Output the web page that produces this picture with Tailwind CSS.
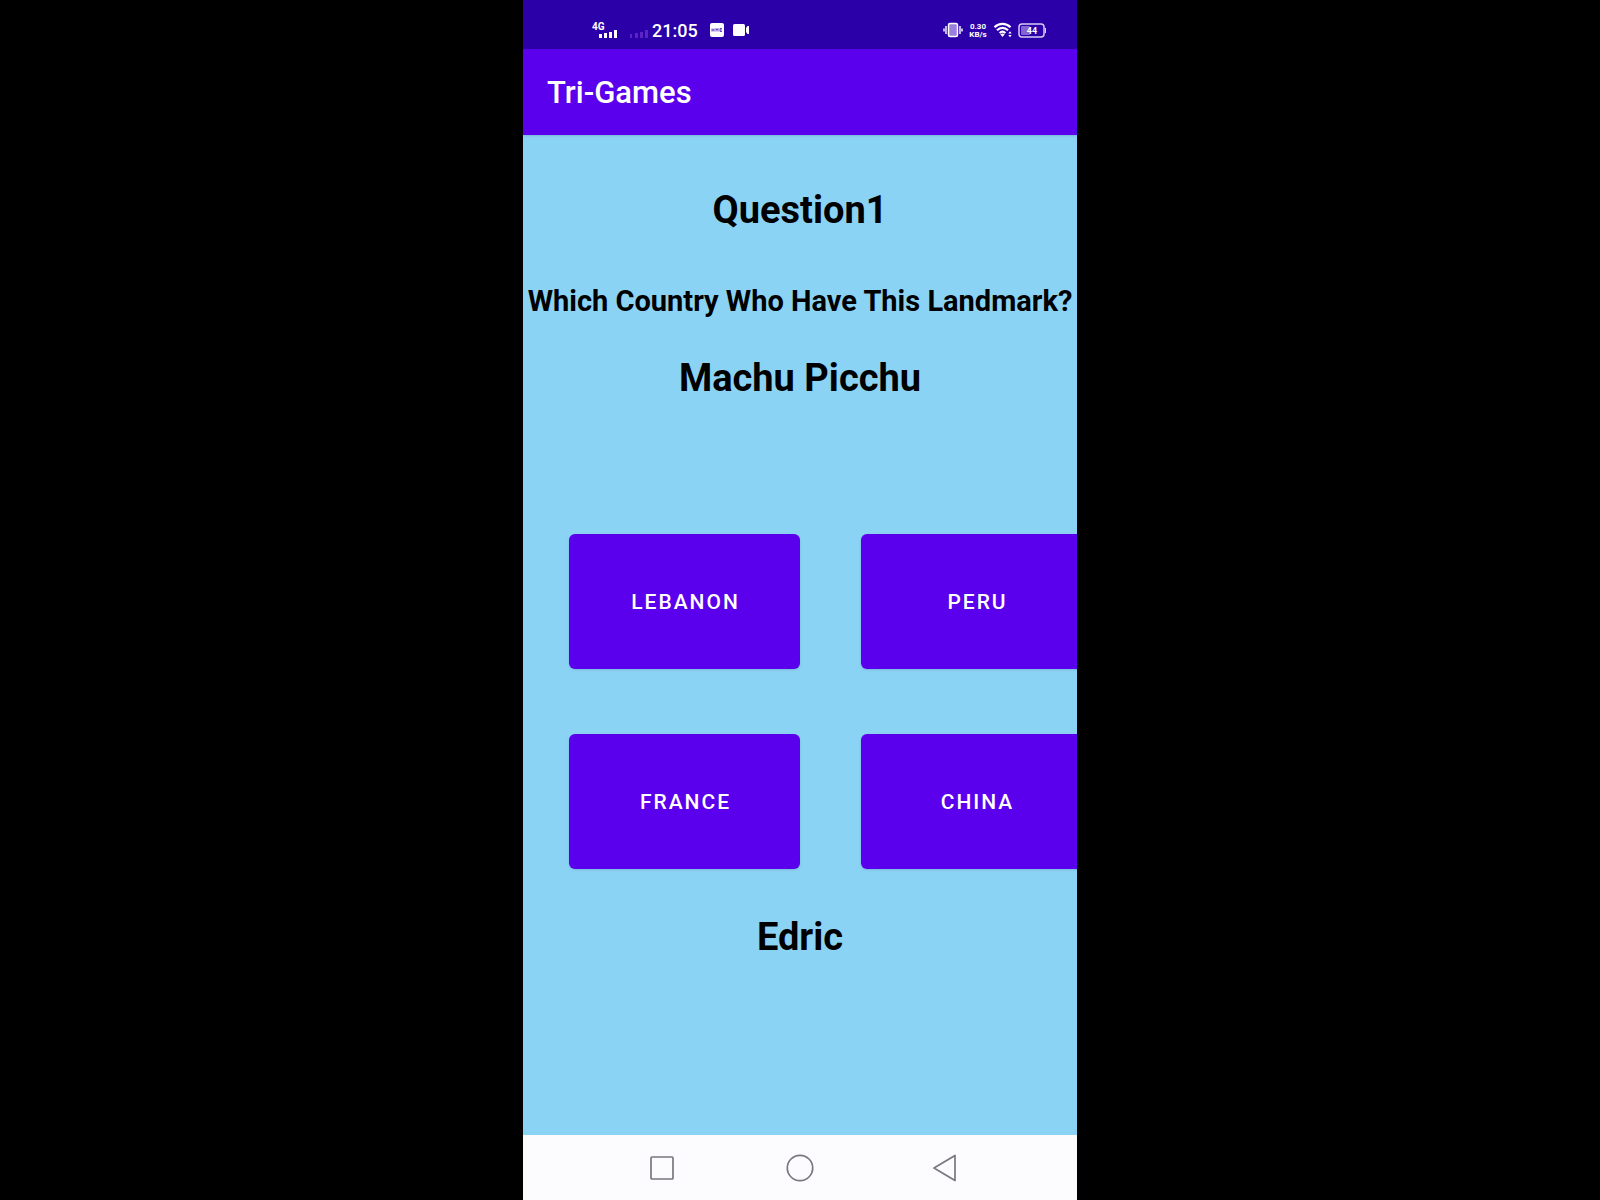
<!DOCTYPE html>
<html lang="en">
<head>
<meta charset="utf-8">
<meta name="viewport" content="width=device-width, initial-scale=1">
<title>Tri-Games</title>
<script src="https://cdn.jsdelivr.net/npm/@tailwindcss/browser@4"></script>
</head>
<body class="bg-black font-[Roboto,sans-serif]">
<div class="mx-auto flex min-h-screen w-full max-w-[554px] flex-col overflow-hidden bg-[#8bd3f5]">

  <!-- Status bar -->
  <div class="flex h-[49px] items-center justify-between bg-[#2b00a8] pt-[13px] pr-[31px] pl-[69px] text-white">
    <div class="flex items-center">
      <svg class="h-5 w-7" viewBox="0 0 28 20" role="img" aria-label="4G signal">
        <text x="0" y="9" font-size="10" font-weight="700" fill="#fff">4G</text>
        <path fill="#fff" d="M7 13h3v4H7zM12 12h3v5h-3zM17 11h3v6h-3zM22 9h3v8h-3z"/>
      </svg>
      <svg class="ml-2 h-5 w-6" viewBox="0 0 24 20" aria-hidden="true">
        <path fill="#5a25c4" d="M2 13h2v4H2zM7 12h3v5H7zM12 11h3v6h-3zM17 9h3v8h-3z"/>
      </svg>
      <span class="text-lg leading-5 font-medium">21:05</span>
      <svg class="ml-3 h-5 w-[14px]" viewBox="0 0 14 20" aria-hidden="true">
        <rect y="2" width="14" height="14" rx="2" fill="#fff"/>
        <path d="M2 7.500v3M4 7.500v3M2 9h2M6 10.500v-3l1 1.500 1-1.500v3M12 7.500h-2v3h2M10 9h2" fill="none" stroke="#5a2cc4" stroke-width=".9"/>
      </svg>
      <svg class="ml-2 h-5 w-[18px]" viewBox="0 0 18 20" aria-hidden="true">
        <rect x="1" y="3" width="12" height="12" rx="1.500" fill="#fff"/>
        <path d="M14 7l1.500-2H17v8h-1.500L14 11z" fill="#fff"/>
      </svg>
    </div>
    <div class="flex items-center gap-[5px]">
      <svg class="h-5 w-5" viewBox="0 0 20 20" aria-hidden="true">
        <rect x="5.500" y="2.500" width="9" height="13" rx="1.500" fill="#9a80dc" stroke="#fff" stroke-width="1.500"/>
        <path d="M3 5v8M1 7.500v3M17 5v8M19 7.500v3" stroke="#fff" stroke-width="1.400"/>
      </svg>
      <span class="w-5 text-center text-[8px] leading-2 font-bold">0.30<br>KB/s</span>
      <svg class="h-5 w-5" viewBox="0 0 20 20" role="img" aria-label="Wi-Fi">
        <path d="M1.500 6.300C6 1.700 13 1.700 17.500 6.300M4 9.200c3.200-3.200 7.800-3.200 11 0M6.600 12c1.800-1.600 4-1.600 5.800 0" fill="none" stroke="#fff" stroke-width="2.200"/>
        <path d="M7.300 13.200q2.200-1.400 4.400 0L9.500 16zM15.300 12.500l1.700-2.200 1.700 2.200zM15.300 14l1.700 2.200 1.700-2.200z" fill="#fff"/>
      </svg>
      <svg class="h-5 w-7" viewBox="0 0 28 20" role="img" aria-label="Battery 44 percent">
        <rect x="1" y="3" width="25" height="13" rx="3" fill="none" stroke="#d9cbf5" stroke-width="1.500"/>
        <rect x="3" y="5" width="9" height="9" rx="1" fill="#8364d2"/>
        <path d="M27.300 7q.8 2.500 0 5" fill="none" stroke="#d9cbf5" stroke-width="1.400"/>
        <text x="14" y="12.500" font-size="9" font-weight="700" text-anchor="middle" fill="#fff">44</text>
      </svg>
    </div>
  </div>

  <!-- App bar -->
  <header class="z-10 flex h-[86px] items-center bg-[#5a00ec] px-6 pt-[2px] shadow-sm">
    <h1 class="text-[31px] leading-10 font-medium text-white">Tri-Games</h1>
  </header>

  <main class="flex grow flex-col items-center pt-[51px] text-center font-bold text-black">
    <h2 class="text-[38px] leading-12">Question1</h2>
    <p class="mt-[47px] text-[29px] leading-10 whitespace-nowrap">Which Country Who Have This Landmark?</p>
    <p class="mt-[33px] text-[38px] leading-12">Machu Picchu</p>

    <div class="mt-[132px] grid grid-cols-[231px_231px] gap-x-[61px] gap-y-[65px] self-start pl-[46px] text-[21px] font-medium tracking-[2px] text-white">
      <button type="button" class="h-[135px] rounded-md bg-[#5a00ec] pt-[2px] pl-[2px] shadow-sm">LEBANON</button>
      <button type="button" class="h-[135px] rounded-md bg-[#5a00ec] pt-[2px] pl-[2px] shadow-sm">PERU</button>
      <button type="button" class="h-[135px] rounded-md bg-[#5a00ec] pt-[2px] pl-[2px] shadow-sm">FRANCE</button>
      <button type="button" class="h-[135px] rounded-md bg-[#5a00ec] pt-[2px] pl-[2px] shadow-sm">CHINA</button>
    </div>

    <p class="mt-11 text-[38px] leading-12">Edric</p>
  </main>

  <!-- System navigation -->
  <nav class="flex h-[65px] items-center justify-center gap-[110px] bg-[#fcfcfe] pl-[6px] text-[#77777f]">
    <button type="button" aria-label="Recent apps">
      <svg class="size-7" viewBox="0 0 28 28" fill="none" stroke="currentColor" stroke-width="1.700"><rect x="3" y="3" width="22" height="22" rx="1"/></svg>
    </button>
    <button type="button" aria-label="Home">
      <svg class="size-7" viewBox="0 0 28 28" fill="none" stroke="currentColor" stroke-width="1.700"><circle cx="14" cy="14" r="12.700"/></svg>
    </button>
    <button type="button" aria-label="Back" class="pl-[6px]">
      <svg class="size-7" viewBox="0 0 28 28" fill="none" stroke="currentColor" stroke-width="1.700" stroke-linejoin="round"><path d="M25 1.500v25L4 14z"/></svg>
    </button>
  </nav>
</div>
</body>
</html>
